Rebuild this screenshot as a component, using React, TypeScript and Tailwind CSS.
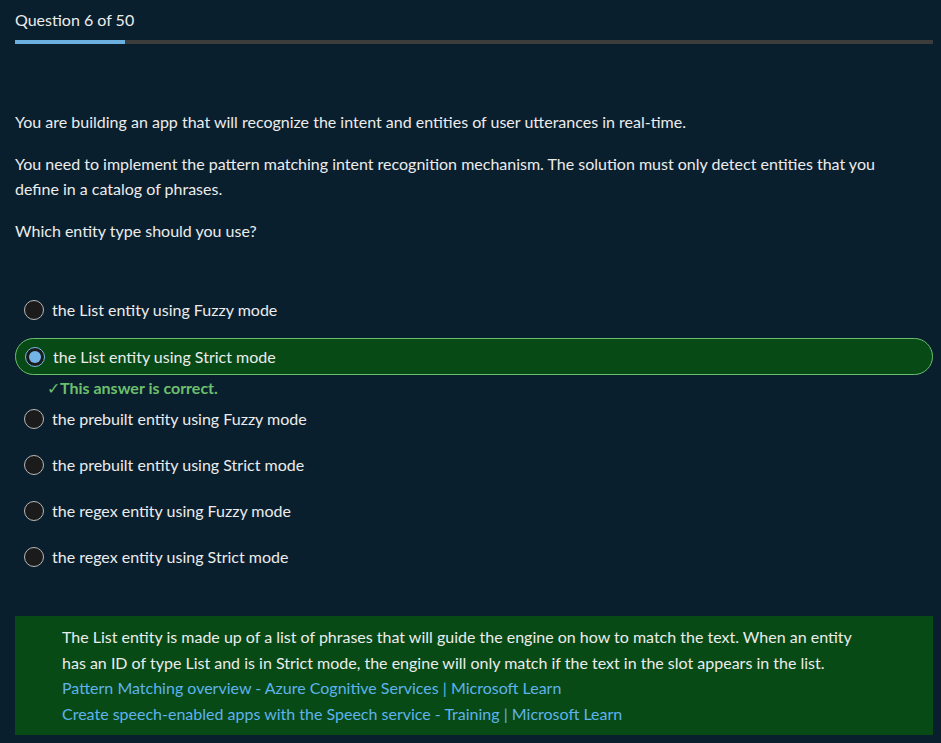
const options = [
  'the List entity using Fuzzy mode',
  'the List entity using Strict mode',
  'the prebuilt entity using Fuzzy mode',
  'the prebuilt entity using Strict mode',
  'the regex entity using Fuzzy mode',
  'the regex entity using Strict mode',
];

const selected = 1;

function Radio({ checked }: { checked: boolean }) {
  if (checked) {
    return (
      <span className="flex h-5 w-5 shrink-0 items-center justify-center rounded-full border border-[#7ab8e6] bg-[#1b1b1b]">
        <span className="h-3 w-3 rounded-full bg-[#72b4e8]" />
      </span>
    );
  }
  return <span className="h-5 w-5 shrink-0 rounded-full border border-[#b8b8b8] bg-[#1b1b1b]" />;
}

export default function App() {
  return (
    <div
      className="h-[743px] overflow-hidden bg-[#0a1f2e] pl-[15px] pr-2 text-[16px] text-[#ececec]"
      style={{ fontFamily: 'Lato, "Open Sans", sans-serif' }}
    >
      <div className="pt-[10px] leading-5">Question 6 of 50</div>
      <div className="mt-[10px] h-1 w-full bg-[#3c3c3c]">
        <div className="h-1 bg-[#6cb0e2]" style={{ width: `${(6 / 50) * 100}%` }} />
      </div>

      <div className="mt-[65px] flex flex-col gap-[17px] leading-[25px]">
        <p>You are building an app that will recognize the intent and entities of user utterances in real-time.</p>
        <p>
          You need to implement the pattern matching intent recognition mechanism. The solution must only detect entities that you
          <br />
          define in a catalog of phrases.
        </p>
        <p>Which entity type should you use?</p>
      </div>

      <div className="mt-[49px] flex flex-col">
        {options.map((opt, i) => (
          <div key={i} className={i === selected ? 'mb-[3px]' : 'mb-[10px]'}>
            <div
              className={
                i === selected
                  ? 'flex h-[37px] items-center gap-2 rounded-full border border-[#6cbf6c] bg-[#074a16] pl-[9px]'
                  : 'flex h-[36px] items-center gap-2 pl-[9px]'
              }
            >
              <Radio checked={i === selected} />
              <span>{opt}</span>
            </div>
            {i === selected && (
              <div className="mt-[3px] pl-[32px] font-bold leading-5 text-[#6cbf6c]">
                <span className="font-normal">✓</span>This answer is correct.
              </div>
            )}
          </div>
        ))}
      </div>

      <div className="mt-[31px] bg-[#074a16] pb-[9px] pl-[47px] pr-4 pt-2 leading-[25.5px]">
        <p>
          The List entity is made up of a list of phrases that will guide the engine on how to match the text. When an entity
          <br />
          has an ID of type List and is in Strict mode, the engine will only match if the text in the slot appears in the list.
        </p>
        <p className="text-[#5fb2ec]">Pattern Matching overview - Azure Cognitive Services | Microsoft Learn</p>
        <p className="text-[#5fb2ec]">Create speech-enabled apps with the Speech service - Training | Microsoft Learn</p>
      </div>
    </div>
  );
}
